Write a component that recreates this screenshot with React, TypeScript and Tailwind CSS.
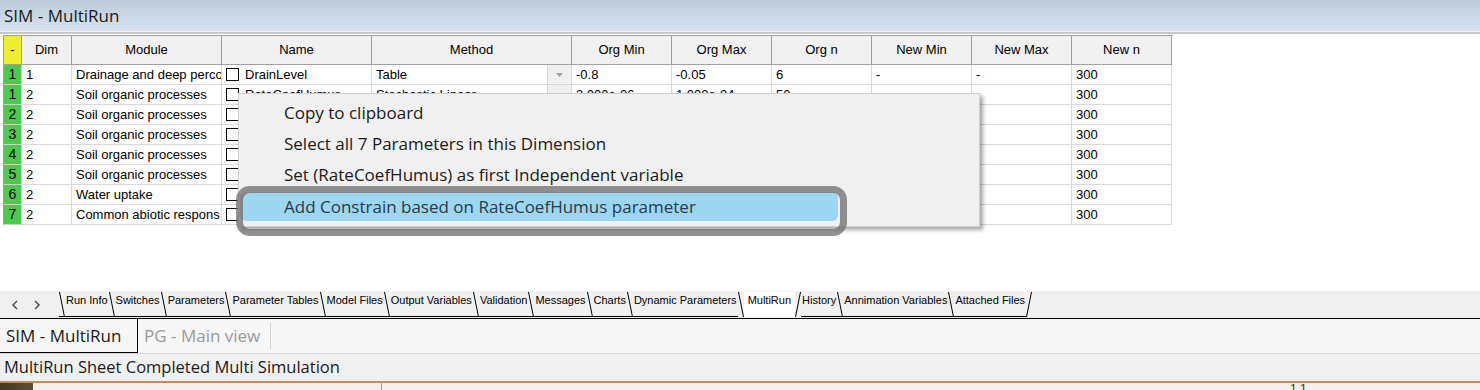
import React from 'react';

interface Row {
  n: string;
  dim: string;
  module: string;
  name: string;
  method: string;
  orgMin: string;
  orgMax: string;
  orgN: string;
  newMin: string;
  newMax: string;
  newN: string;
}

const rows: Row[] = [
  { n: '1', dim: '1', module: 'Drainage and deep perco', name: 'DrainLevel', method: 'Table', orgMin: '-0.8', orgMax: '-0.05', orgN: '6', newMin: '-', newMax: '-', newN: '300' },
  { n: '1', dim: '2', module: 'Soil organic processes', name: 'RateCoefHumus', method: 'Stochastic Linear', orgMin: '2.000e-06', orgMax: '1.000e-04', orgN: '50', newMin: '', newMax: '', newN: '300' },
  { n: '2', dim: '2', module: 'Soil organic processes', name: 'RateCoefLitter1', method: 'Stochastic Linear', orgMin: '0.01', orgMax: '0.1', orgN: '50', newMin: '', newMax: '', newN: '300' },
  { n: '3', dim: '2', module: 'Soil organic processes', name: 'RateCoefLitter2', method: 'Stochastic Linear', orgMin: '1.000e-04', orgMax: '0.01', orgN: '50', newMin: '', newMax: '', newN: '300' },
  { n: '4', dim: '2', module: 'Soil organic processes', name: 'HumFracLitter1', method: 'Stochastic Linear', orgMin: '0.1', orgMax: '0.3', orgN: '50', newMin: '', newMax: '', newN: '300' },
  { n: '5', dim: '2', module: 'Soil organic processes', name: 'HumFracLitter2', method: 'Stochastic Linear', orgMin: '0.1', orgMax: '0.3', orgN: '50', newMin: '', newMax: '', newN: '300' },
  { n: '6', dim: '2', module: 'Water uptake', name: 'PsiRedStart', method: 'Stochastic Linear', orgMin: '200', orgMax: '800', orgN: '50', newMin: '', newMax: '', newN: '300' },
  { n: '7', dim: '2', module: 'Common abiotic respons', name: 'TempCoefA', method: 'Stochastic Linear', orgMin: '0.05', orgMax: '0.15', orgN: '50', newMin: '', newMax: '', newN: '300' },
];

const tabs = [
  'Run Info', 'Switches', 'Parameters', 'Parameter Tables', 'Model Files', 'Output Variables',
  'Validation', 'Messages', 'Charts', 'Dynamic Parameters', 'MultiRun', 'History',
  'Annimation Variables', 'Attached Files',
];

const menuItems = [
  'Copy to clipboard',
  'Select all 7 Parameters in this Dimension',
  'Set (RateCoefHumus) as first Independent variable',
];

function Slash({ back, base = true }: { back?: boolean; base?: boolean }) {
  return (
    <svg width="6" height="25" className="shrink-0">
      {back ? <line x1="0.5" y1="0" x2="5.5" y2="25" stroke="#000" strokeWidth="1" /> : <line x1="5.5" y1="0" x2="0.5" y2="25" stroke="#000" strokeWidth="1" />}
      {base && <line x1="0" y1="24.5" x2="6" y2="24.5" stroke="#000" strokeWidth="1" />}
    </svg>
  );
}

function HeadCell({ label, w }: { label: string; w: string }) {
  return (
    <div className={`${w} h-[29px] shrink-0 flex items-center justify-center bg-[#f0f0f0] border-r border-b border-[#a0a0a0]`}>
      {label}
    </div>
  );
}

function Cell({ children, w }: { children?: React.ReactNode; w: string }) {
  return (
    <div className={`${w} h-[20px] shrink-0 flex items-center pl-[4px] border-r border-b border-[#d9d9d9] overflow-hidden whitespace-nowrap`}>
      {children}
    </div>
  );
}

export default function App() {
  return (
    <div className="w-[1480px] h-[390px] overflow-hidden bg-white flex flex-col font-['Open_Sans','Noto_Sans',sans-serif] text-black">
      {/* Title */}
      <div className="h-[31px] shrink-0 bg-gradient-to-b from-[#bccad8] to-[#d7e3ef] flex items-center pl-[4px] text-[17px] text-[#1a1a1a]">
        SIM - MultiRun
      </div>
      <div className="h-[1px] bg-[#f4f4f4]" />
      <div className="h-[2px] bg-[#c6c6c6]" />

      {/* Grid area */}
      <div className="relative h-[257px] shrink-0 bg-white pt-[1px]">
        <div className="ml-[3px] w-[1170px] border-l border-t border-[#a0a0a0] font-['Liberation_Sans',Arial,sans-serif] text-[13px]">
          <div className="flex">
            <div className="w-[18px] h-[29px] shrink-0 flex items-center justify-center bg-[#eeee30] border-r border-b border-[#a0a0a0]">-</div>
            <HeadCell label="Dim" w="w-[50px]" />
            <HeadCell label="Module" w="w-[150px]" />
            <HeadCell label="Name" w="w-[150px]" />
            <HeadCell label="Method" w="w-[200px]" />
            <HeadCell label="Org Min" w="w-[100px]" />
            <HeadCell label="Org Max" w="w-[100px]" />
            <HeadCell label="Org n" w="w-[100px]" />
            <HeadCell label="New Min" w="w-[100px]" />
            <HeadCell label="New Max" w="w-[100px]" />
            <HeadCell label="New n" w="w-[100px]" />
          </div>
          {rows.map((r, i) => (
            <div key={i} className="flex">
              <div className="w-[18px] h-[20px] shrink-0 flex items-center justify-center bg-[#4dca4d] border-r border-b border-[#d0d0d0] text-[14px]">{r.n}</div>
              <Cell w="w-[50px]">{r.dim}</Cell>
              <Cell w="w-[150px]">{r.module}</Cell>
              <Cell w="w-[150px]">
                <span className="w-[13px] h-[13px] border border-black bg-white mr-[6px] shrink-0" />
                {r.name}
              </Cell>
              <div className="w-[200px] h-[20px] shrink-0 flex items-center pl-[4px] border-r border-b border-[#d9d9d9] whitespace-nowrap">
                <span className="flex-1">{r.method}</span>
                <span className="w-[24px] h-[19px] flex items-center justify-center bg-[#f0f0f0] border-l border-[#d4d4d4]">
                  <svg width="7" height="4"><polygon points="0,0 7,0 3.5,4" fill="#a0a0a0" /></svg>
                </span>
              </div>
              <Cell w="w-[100px]">{r.orgMin}</Cell>
              <Cell w="w-[100px]">{r.orgMax}</Cell>
              <Cell w="w-[100px]">{r.orgN}</Cell>
              <Cell w="w-[100px]">{r.newMin}</Cell>
              <Cell w="w-[100px]">{r.newMax}</Cell>
              <Cell w="w-[100px]">{r.newN}</Cell>
            </div>
          ))}
        </div>

        {/* Context menu */}
        <div className="absolute left-[238px] top-[59px] w-[742px] bg-[#f0f0f0] border border-[#cfcfcf] shadow-[3px_3px_4px_rgba(0,0,0,0.35)] pt-[3px] pb-[5px] text-[17px] text-[#1a1a1a]">
          {menuItems.map((m) => (
            <div key={m} className="h-[31px] flex items-center pl-[45px]">{m}</div>
          ))}
          <div className="h-[31px] pt-[2px] px-[1px]">
            <div className="w-[598px] h-[29px] rounded-[6px] bg-[#9dd6f1] flex items-center pl-[44px] text-[#2a3a48]">
              Add Constrain based on RateCoefHumus parameter
            </div>
          </div>
        </div>
        {/* annotation ring */}
        <div className="absolute left-[236px] top-[152px] w-[611px] h-[50px] rounded-[14px] border-[7px] border-[#6e6e6e]/75" />
      </div>

      {/* Sheet tabs */}
      <div className="h-[28px] shrink-0 bg-[#f0f0f0] border-b border-black pt-[1px] flex items-start font-['Liberation_Sans',Arial,sans-serif] text-[11px] leading-[13px]">
        <div className="w-[59px] h-[25px] flex items-center gap-[14px] pl-[11px]">
          <svg width="8" height="10"><polyline points="6,1 2,5 6,9" fill="none" stroke="#505050" strokeWidth="1.5" /></svg>
          <svg width="8" height="10"><polyline points="2,1 6,5 2,9" fill="none" stroke="#505050" strokeWidth="1.5" /></svg>
        </div>
        {tabs.map((t) => {
          const active = t === 'MultiRun';
          return (
            <React.Fragment key={t}>
              {t === 'History' ? <Slash base={false} /> : <Slash back base={!active} />}
              <span className={active ? 'h-[25px] pt-[2px] px-[4px] bg-white' : 'h-[25px] pt-[2px] px-[1px] border-b border-black'}>
                {t}
              </span>
            </React.Fragment>
          );
        })}
        <Slash base={false} />
      </div>

      {/* Document tabs */}
      <div className="h-[34px] shrink-0 bg-[#f6f6f6] flex items-stretch text-[17px]">
        <div className="w-[138px] flex items-center pl-[6px] border-r border-b border-black text-[#1a1a1a]">SIM - MultiRun</div>
        <div className="flex items-center pl-[6px] pr-[10px] text-[#9a9a9a]">PG - Main view</div>
        <div className="w-[1px] my-[4px] bg-[#d0d0d0]" />
      </div>
      <div className="h-[1px] bg-[#d8d8d8]" />

      {/* Status bar */}
      <div className="h-[27px] shrink-0 bg-[#f0f0f0] flex items-center pl-[4px] text-[16.5px] text-[#1a1a1a]">
        MultiRun Sheet Completed Multi Simulation
      </div>
      <div className="h-[2px] bg-[#bf8c5c]" />
      <div className="flex-1 flex bg-[#f0f0f0] overflow-hidden">
        <div className="w-[33px] bg-gradient-to-r from-[#3d3a28] to-[#5a5236]" />
        <div className="w-[349px] border-r border-[#a0a0a0]" />
        <div className="flex-1 pl-[908px] text-[12px] leading-[12px] font-['Liberation_Sans',Arial,sans-serif] text-[#333]">1 1</div>
      </div>
    </div>
  );
}
